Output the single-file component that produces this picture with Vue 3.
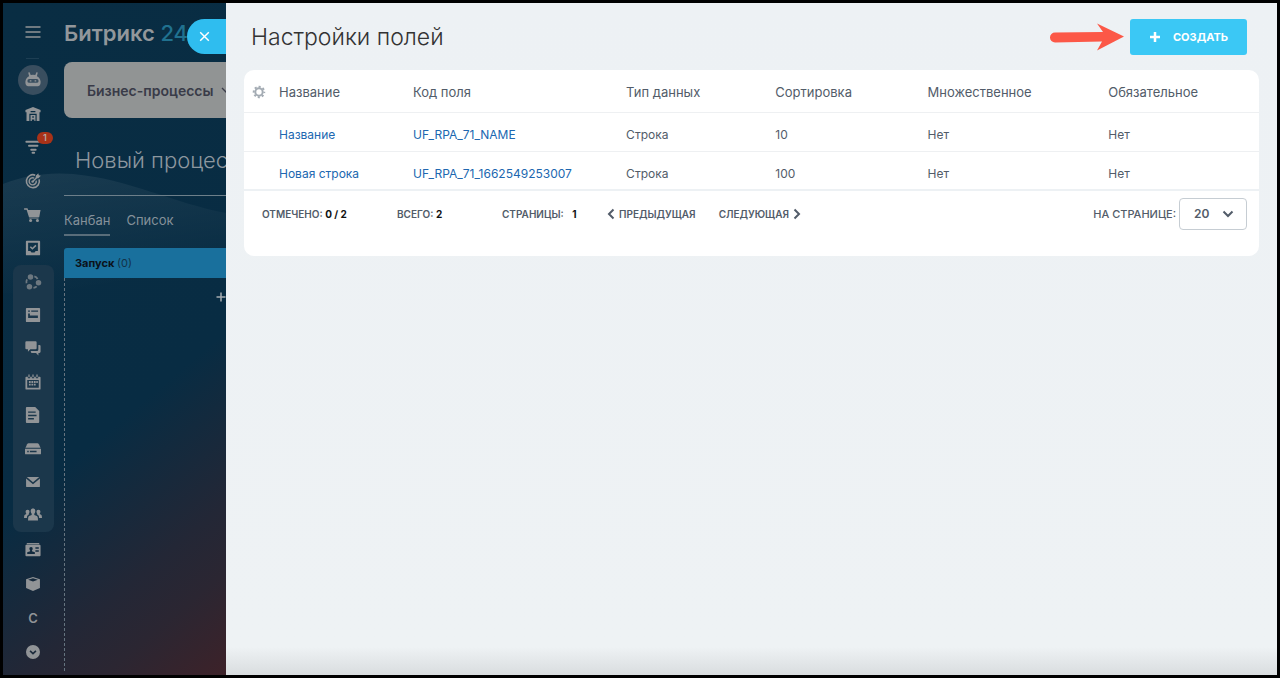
<script setup>
import { ref } from 'vue'

const columns = ['Название', 'Код поля', 'Тип данных', 'Сортировка', 'Множественное', 'Обязательное']
const rows = [
  { name: 'Название', code: 'UF_RPA_71_NAME', type: 'Строка', sort: '10', multiple: 'Нет', required: 'Нет' },
  { name: 'Новая строка', code: 'UF_RPA_71_1662549253007', type: 'Строка', sort: '100', multiple: 'Нет', required: 'Нет' },
]
const pageSize = ref('20')
</script>

<template>
  <div class="frame">
    <div class="app">
      <div class="workspace">
        <svg class="wave" viewBox="0 0 223 672" preserveAspectRatio="none" aria-hidden="true">
          <defs>
            <linearGradient id="wave-fade" x1="0" y1="0" x2="0.3" y2="1">
              <stop offset="0" stop-color="#fff" stop-opacity=".07" />
              <stop offset="1" stop-color="#fff" stop-opacity="0" />
            </linearGradient>
          </defs>
          <path d="M0 181C22 172 46 169 70 171C126 176 170 200 223 210V290H0Z" fill="url(#wave-fade)" />
        </svg>

        <nav class="sidebar" aria-label="Главное меню">
          <button class="item menu" aria-label="Меню">
            <svg viewBox="0 0 18 18"><path d="M1.500 4h15M1.500 9h15M1.500 14h15" stroke="currentColor" stroke-width="1.600" /></svg>
          </button>
          <hr class="divider">
          <div class="list head">
            <button class="item" aria-label="Роботы">
              <span class="disc">
                <svg viewBox="0 0 18 18"><path fill="currentColor" fill-rule="evenodd" d="M4.200 1.600l1.400-.4 1.100 2.900a9 9 0 0 1 4.600 0l1.100-2.900 1.400.4-.9 3.600c1.900 1 3.400 2.500 3.700 5.300.2 2.700-.6 4.700-2.600 4.700H4c-2 0-2.800-2-2.600-4.700.3-2.800 1.800-4.300 3.700-5.300zM5.300 8a1.900 1.900 0 0 0 0 3.800h7.400a1.900 1.900 0 0 0 0-3.800zM5.800 9.200h1.600v1.400H5.800zm4.800 0h1.600v1.400h-1.600z" /></svg>
              </span>
            </button>
            <button class="item" aria-label="Компания">
              <svg viewBox="0 0 18 18"><path fill="currentColor" fill-rule="evenodd" d="M9 1l8.500 3.600v2.400h-1.200V17h-3.200V8.700H4.900V17H1.700V7H.5V4.600zM6.200 10h5.600v7h-1.300v-1.800H7.700V17H6.200zm2 1.600v1.500h1.700v-1.500zM6.300 5.600v1.300h5.400V5.600z" /></svg>
            </button>
            <button class="item" aria-label="Лента">
              <svg viewBox="0 0 18 18"><g stroke="currentColor" stroke-width="2.200" stroke-linecap="round"><path d="M1.500 3h15M4.500 7.700h9.500M7 12h5" /><path d="M8.500 15.500h1.800" /></g></svg>
              <span class="badge">1</span>
            </button>
            <button class="item" aria-label="Цели">
              <svg viewBox="0 0 18 18" fill="none" stroke="currentColor"><path d="M11.500 2.400A7.300 7.300 0 1 0 15.900 7.200" stroke-width="1.800" /><path d="M10.300 5.700A4 4 0 1 0 12.600 8.500" stroke-width="1.600" /><path d="M8.800 9.600L14 4.200" stroke-width="1.600" /><path d="M12.200 5.800V3L15 .3l.5 2.300 2.300.5L15 6z" fill="currentColor" stroke="none" /><circle cx="8.600" cy="9.700" r="1.400" fill="currentColor" stroke="none" /></svg>
            </button>
            <button class="item" aria-label="Магазин">
              <svg viewBox="0 0 18 18" fill="currentColor"><path d="M-1 1.300h3.800l.7 2.200H17.500L16 11.500H4.500L1.800 3H-1zM4.800 12h10.500v1H4.800z" /><circle cx="6.300" cy="15.300" r="1.700" /><circle cx="14" cy="15.300" r="1.700" /></svg>
            </button>
            <button class="item" aria-label="Задачи">
              <svg viewBox="0 0 18 18"><path fill="currentColor" fill-rule="evenodd" d="M2 .8h14a1 1 0 0 1 1 1v14.400a1 1 0 0 1-1 1H2a1 1 0 0 1-1-1V1.800a1 1 0 0 1 1-1zm1.500 2.200v9.500H6l1.300 1.700h3.400l1.300-1.700h2.500V3z" /><path d="M6 7.600l2.300 2.200L12.300 6" fill="none" stroke="currentColor" stroke-width="1.800" /></svg>
            </button>
          </div>

          <div class="list group">
            <button class="item" aria-label="Процессы">
              <svg viewBox="0 0 18 18" class="dim"><circle cx="6.200" cy="3.300" r="3.100" fill="currentColor" /><circle cx="15.200" cy="9.800" r="3.100" fill="currentColor" /><circle cx="5" cy="14.300" r="3.100" fill="currentColor" /><path d="M10.500 2.700q2.400.7 3.700 2.900M13.200 14q-1.500 1.400-3.700 1.700M1.700 10.500q-.6-2.200.6-4.400" fill="none" stroke="currentColor" stroke-width="2" /></svg>
            </button>
            <button class="item" aria-label="Сайты">
              <svg viewBox="0 0 18 18"><path fill="currentColor" fill-rule="evenodd" d="M2 1h14a1 1 0 0 1 1 1v14a1 1 0 0 1-1 1H2a1 1 0 0 1-1-1V2a1 1 0 0 1 1-1zm1.500 2.800v1.500h2V3.800zm3.500 0v1.500h7.700V3.800zM3.500 7.300v5.200h11V7.300zM5.500 7.300h9v2.200h-9z" /></svg>
            </button>
            <button class="item" aria-label="Чат">
              <svg viewBox="0 0 18 18" fill="currentColor"><path d="M1.600 1.500h10.300a1.200 1.200 0 0 1 1.200 1.200v6.600a1.200 1.200 0 0 1-1.200 1.200H6L3.300 13.300v-2.800H1.600A1.200 1.200 0 0 1 .4 9.300V2.700a1.200 1.200 0 0 1 1.200-1.200z" /><path d="M15 5.500h1.200a1.300 1.300 0 0 1 1.300 1.300v6.500a1.300 1.300 0 0 1-1.300 1.300h-1.100v2.700l-2.700-2.700H8A1.500 1.500 0 0 1 6.500 13.200v-.7h7A1.500 1.500 0 0 0 15 11z" /></svg>
            </button>
            <button class="item" aria-label="Календарь">
              <svg viewBox="0 0 18 18" fill="currentColor"><path fill-rule="evenodd" d="M1.500 3h1.700v1.700h2.600V3h1.900v1.700h2.600V3h1.900v1.700h2.600V3h1.700a1 1 0 0 1 1 1v12.500a1 1 0 0 1-1 1h-15a1 1 0 0 1-1-1V4a1 1 0 0 1 1-1zM2.500 6.700v8.800h13V6.700z" /><path d="M3.800 .5h1.400v3.200H3.800zM8.300 .5h1.400v3.200H8.300zM12.800 .5h1.400v3.200h-1.400zM7.200 8h2v2h-2zM10 8h2v2h-2zM12.700 8h1.700v2h-1.700zM4.400 11h2v2h-2zM7.200 11h2v2h-2zM10 11h2v2h-2zM4.400 8h2v2h-2z" /></svg>
            </button>
            <button class="item" aria-label="Документы">
              <svg viewBox="0 0 18 18"><path fill="currentColor" fill-rule="evenodd" d="M2 0h9.500l4.500 4.500V17a1 1 0 0 1-1 1H2a1 1 0 0 1-1-1V1a1 1 0 0 1 1-1zm1.500 5v1.600h8.500V5zm0 3.700v1.600h9.500V8.700zm0 3.700V14H10v-1.600z" /></svg>
            </button>
            <button class="item" aria-label="Диск">
              <svg viewBox="0 0 18 18" fill="currentColor"><path d="M4 2.600h10q1 0 1.600 1L17.500 7.500H.5l1.900-3.900q.6-1 1.600-1z" /><path fill-rule="evenodd" d="M0 8.700h18V14a1 1 0 0 1-1 1H1a1 1 0 0 1-1-1zm2.500 2.300v1.700h1.700V11zm3 0v1.700H13V11z" /></svg>
            </button>
            <button class="item" aria-label="Почта">
              <svg viewBox="0 0 18 18" fill="currentColor"><path d="M2 3.500h14L9 9.300z" /><path d="M1.200 5l7.800 6.500L16.800 5v8.700a1 1 0 0 1-1 1H2.200a1 1 0 0 1-1-1z" /></svg>
            </button>
            <button class="item" aria-label="Группы">
              <svg class="wide" viewBox="0 0 18 14" fill="currentColor"><path d="M9 .5c1.700 0 2.500 1.200 2.300 2.900-.1 1-.5 1.800-1 2.300v1.200l2.600 1.200q.8.500.9 1.700l.2 2.700H4l.2-2.700q.1-1.200.9-1.700l2.600-1.200V5.700c-.5-.5-.9-1.300-1-2.300C6.500 1.700 7.300.5 9 .5z" /><path d="M3.600 1.700c1.300 0 1.900.8 1.900 2 0 1-.4 1.700-.8 2.200v.9L3.500 7.500q-.6.800-.6 2.500H0l.2-2q.1-.9.700-1.200l1.500-.9c-.4-.5-.8-1.200-.8-2.200 0-1.200.7-2 2-2zM14.400 1.700c-1.300 0-1.900.8-1.900 2 0 1 .4 1.700.8 2.200v.9l1.200.7q.6.800.6 2.500H18l-.2-2q-.1-.9-.7-1.200l-1.500-.9c.4-.5.8-1.200.8-2.200 0-1.200-.7-2-2-2z" /></svg>
            </button>
          </div>

          <div class="list tail">
            <button class="item" aria-label="CRM">
              <svg viewBox="0 0 18 18" fill="currentColor"><path d="M2 1.200h14v1.500H2z" /><path fill-rule="evenodd" d="M1.500 3.200h15a1 1 0 0 1 1 1V15a1 1 0 0 1-1 1h-15a1 1 0 0 1-1-1V4.200a1 1 0 0 1 1-1zm5.300 2.500c-1.400 0-2 .9-1.800 2.200.1.800.5 1.300.8 1.600v.8L2.500 11.600V13.500h8.600v-1.900L7.800 10.300v-.8c.3-.3.7-.8.8-1.600.2-1.300-.4-2.200-1.800-2.200zM11.700 6v1.600H15.500V6zm0 3.300v1.600h3.800V9.300z" /></svg>
            </button>
            <button class="item" aria-label="Приложения">
              <svg viewBox="0 0 18 18" fill="currentColor"><path fill-rule="evenodd" d="M9 1l7.800 2.600v10L9 17l-7.800-3.400v-10zM3.500 4.300L9 6.200l5.500-1.900L9 2.600z" /></svg>
            </button>
            <button class="item letter" aria-label="Сотрудники">С</button>
            <button class="item" aria-label="Ещё">
              <svg viewBox="0 0 18 18"><circle cx="9" cy="9" r="7.900" fill="currentColor" /><path d="M5.700 7.700L9 10.900l3.300-3.200" fill="none" stroke="#1b2a3b" stroke-width="1.800" /></svg>
            </button>
          </div>
        </nav>

        <main class="board">
          <div class="logo">Битрикс <span>24</span></div>
          <button class="tool">
            Бизнес-процессы
            <svg viewBox="0 0 10 10"><path d="M1 3l4 4 4-4" fill="none" stroke="currentColor" stroke-width="1.300" /></svg>
          </button>
          <h1 class="process">Новый процесс</h1>
          <div class="tabs">
            <a class="tab active" href="#kanban">Канбан</a>
            <a class="tab" href="#list">Список</a>
          </div>
          <section class="stage">
            <h2 class="stage-head">Запуск <span>(0)</span></h2>
            <div class="stage-body"><button class="add" aria-label="Добавить">
              <svg viewBox="0 0 10 10"><path d="M5 .5v9M.5 5h9" stroke="currentColor" stroke-width="1.500" /></svg>
            </button></div>
          </section>
        </main>

        <button class="close" aria-label="Закрыть">
          <svg viewBox="0 0 12 12"><path d="M1.300 1.300l9.400 9.400M10.700 1.300l-9.400 9.400" stroke="currentColor" stroke-width="1.600" /></svg>
        </button>
      </div>

      <section class="panel">
        <header class="panel-head">
          <h1>Настройки полей</h1>
          <svg class="arrow" viewBox="0 0 76 28" aria-hidden="true"><path d="M6 9.500L54 9L48 .5L75 13.500L48 27.500L53 18.500L6 19.500A5 5 0 0 1 6 9.500Z" fill="#fc5847" /></svg>
          <button class="create">
            <svg viewBox="0 0 12 12"><path d="M6 1v10M1 6h10" stroke="currentColor" stroke-width="2.500" /></svg>
            СОЗДАТЬ
          </button>
        </header>

        <div class="card">
          <table>
            <colgroup>
              <col class="c-gear"><col class="c-name"><col class="c-code"><col class="c-type"><col class="c-sort"><col class="c-multi"><col>
            </colgroup>
            <thead>
              <tr>
                <th>
                  <button class="gear" aria-label="Настроить список">
                    <svg viewBox="0 0 14 14"><circle cx="7" cy="7" r="3.700" fill="none" stroke="currentColor" stroke-width="2" /><circle cx="7" cy="7" r="5.300" fill="none" stroke="currentColor" stroke-width="1.900" stroke-dasharray="2.080 2.080" stroke-dashoffset="1.040" /></svg>
                  </button>
                </th>
                <th v-for="c in columns" :key="c" scope="col">{{ c }}</th>
              </tr>
            </thead>
            <tbody>
              <tr v-for="r in rows" :key="r.code">
                <td></td>
                <td><a href="#field">{{ r.name }}</a></td>
                <td><a href="#field">{{ r.code }}</a></td>
                <td>{{ r.type }}</td>
                <td>{{ r.sort }}</td>
                <td>{{ r.multiple }}</td>
                <td>{{ r.required }}</td>
              </tr>
            </tbody>
          </table>

          <footer class="pager">
            <span class="checked">ОТМЕЧЕНО: <b>0 / 2</b></span>
            <span class="total">ВСЕГО: <b>2</b></span>
            <span class="pages">СТРАНИЦЫ: <b>1</b></span>
            <button class="step prev">
              <svg viewBox="0 0 8 12"><path d="M6.500 1.500L2 6l4.500 4.500" fill="none" stroke="currentColor" stroke-width="2" /></svg>
              ПРЕДЫДУЩАЯ
            </button>
            <button class="step">
              СЛЕДУЮЩАЯ
              <svg viewBox="0 0 8 12"><path d="M1.500 1.500L6 6l-4.500 4.500" fill="none" stroke="currentColor" stroke-width="2" /></svg>
            </button>
            <label class="size-label" for="page-size">НА СТРАНИЦЕ:</label>
            <span class="size">
              <select id="page-size" v-model="pageSize">
                <option>5</option>
                <option>10</option>
                <option>20</option>
                <option>50</option>
              </select>
              <svg viewBox="0 0 12 8"><path d="M1.500 1.500L6 6l4.500-4.500" fill="none" stroke="currentColor" stroke-width="2" /></svg>
            </span>
          </footer>
        </div>
      </section>
    </div>
  </div>
</template>

<style>
body { margin: 0; background: #000; }
</style>

<style scoped>
.frame {
  box-sizing: border-box;
  min-height: 100vh;
  padding: 3px;
  display: flex;
  background: #000;
  font-family: Inter, "Open Sans", sans-serif;
}
.frame * { box-sizing: border-box; }
button { font: inherit; border: 0; padding: 0; background: none; color: inherit; cursor: pointer; }
a { text-decoration: none; }
svg { display: block; flex: none; overflow: visible; }

.app { flex: 1; display: flex; min-width: 0; }

.workspace {
  position: relative;
  flex: none;
  width: 223px;
  display: flex;
  overflow: hidden;
  background: linear-gradient(140deg, #092d43 0%, #082c43 60%, #232736 80%, #2b2632 88%, #3d2229 100%);
  color: #919497;
}
.wave { position: absolute; inset: 0; width: 100%; height: 100%; }

.sidebar { position: relative; flex: none; width: 61px; padding-left: 10px; display: flex; flex-direction: column; align-items: flex-start; }
.item { position: relative; flex: 1; width: 40px; display: flex; align-items: center; justify-content: center; }
.item svg { width: 16px; height: 16px; }
.item svg.wide { width: 18px; height: 14px; }
.item.menu { flex: none; height: 55px; padding-top: 3px; }
.item.menu svg { width: 18px; height: 18px; }
.divider { width: 13px; height: 1px; margin: 0 0 4px 13px; border: 0; background: #1d3e53; }
.list { display: flex; flex-direction: column; align-items: flex-start; width: 41px; }
.head { height: 202px; }
.group { height: 267px; border-radius: 8px; background: #1b374b; }
.tail { height: 136px; margin-top: 1px; }
.disc { display: flex; align-items: center; justify-content: center; width: 30px; height: 30px; flex: none; border-radius: 50%; background: #394e5f; }
.disc svg { width: 18px; height: 18px; }
.dim { opacity: .7; }
.letter { font-size: 13px; font-weight: 600; }
.badge {
  position: absolute; top: 2px; right: 0;
  width: 16px; height: 12px; border-radius: 6px;
  background: #a83218; color: #b5aaa6;
  font-size: 9px; line-height: 12px; font-weight: 600;
}

.board { position: relative; flex: 1; min-width: 0; display: flex; flex-direction: column; white-space: nowrap; }
.logo { height: 59px; font-size: 22px; line-height: 60px; font-weight: 600; color: #92979b; }
.logo span { color: #20718f; font-weight: 500; }
.tool {
  width: 220px; height: 56px; padding: 0 23px; border-radius: 8px;
  display: flex; align-items: center; gap: 7px;
  background: #919494; color: #393b48; font-size: 14px; font-weight: 600;
}
.tool svg { width: 10px; height: 10px; }
.process { margin: 0; height: 78px; padding: 17px 0 0 11px; font-size: 22px; line-height: 50px; font-weight: 300; color: #8d979f; border-bottom: 1px solid #6d7f8a; }
.tabs { display: flex; gap: 16px; height: 52px; padding-top: 9px; font-size: 13px; line-height: 30px; }
.tab { color: #85919a; height: 31px; }
.tab.active { border-bottom: 2px solid #596d7a; }
.stage { flex: 1; display: flex; flex-direction: column; }
.stage-head { margin: 0; height: 30px; padding-left: 11px; border-radius: 3px 0 0 0; background: #19709d; color: #0b121a; font-size: 11px; line-height: 30px; font-weight: 700; }
.stage-head span { font-weight: 400; color: #123249; }
.stage-body { flex: 1; margin-bottom: 4px; border-left: 1px dashed #65737e; }
.add { display: block; margin: 14px 0 0 151px; color: #a5acb1; }
.add svg { width: 10px; height: 10px; }

.close {
  position: absolute; top: 16px; right: 0;
  width: 39px; height: 35px; padding-left: 12px;
  border-radius: 18px 0 0 18px; background: #2fbdef; color: #fff;
}
.close svg { width: 11px; height: 11px; }

.panel { flex: 1; min-width: 0; padding: 0 18px; background: linear-gradient(#edf1f4, #eef2f4 calc(100% - 28px), #d9dddf); }
.panel-head { height: 67px; padding: 0 12px 0 7px; display: flex; align-items: center; }
h1 { margin: 0; }
.panel-head h1 { flex: 1; font-size: 23px; line-height: 30px; font-weight: 300; color: #333; }
.arrow { width: 76px; height: 28px; margin-right: 5px; }
.create {
  width: 117px; height: 36px; border-radius: 3px;
  display: flex; align-items: center; justify-content: center; gap: 12px;
  background: #3bc8f5; color: #fff; font-size: 11px; font-weight: 700;
}
.create svg { width: 12px; height: 12px; }

.card { border-radius: 10px; background: #fff; color: #525c69; overflow: hidden; }
table { width: 100%; table-layout: fixed; border-collapse: collapse; font-size: 12px; }
.c-gear { width: 35px; }
.c-name { width: 13.2%; }
.c-code { width: 21%; }
.c-type { width: 14.7%; }
.c-sort { width: 15%; }
.c-multi { width: 17.8%; }
th { height: 42px; padding: 2px 0 0; text-align: left; font-size: 13px; font-weight: 400; border-bottom: 1px solid #eef0f2; }
td { height: 39px; padding: 6px 0 0; border-bottom: 1px solid #eef0f2; }
tbody tr:last-child td { border-bottom: 2px solid #edf1f4; }
td a { color: #2067b0; }
.gear { display: block; margin-left: 8px; color: #a3abb3; }
.gear svg { width: 14px; height: 14px; }

.pager { display: flex; align-items: center; height: 65px; padding: 0 12px 20px 18px; font-size: 10px; font-weight: 600; white-space: nowrap; }
.pager b { color: #111; font-weight: 700; }
.checked { width: 135px; }
.total { width: 105px; }
.pages { width: 105px; }
.pages b { margin-left: 6px; }
.step { display: flex; align-items: center; gap: 4px; }
.step svg { width: 8px; height: 12px; }
.prev { margin-right: 23px; }
.size-label { margin-left: auto; margin-right: 3px; font-size: 11px; font-weight: 500; }
.size { position: relative; display: flex; align-items: center; }
.size select {
  appearance: none; width: 68px; height: 32px; padding: 0 14px;
  border: 1px solid #c6cdd3; border-radius: 4px; background: #fff; color: #525c69;
  font-family: inherit; font-size: 12px; font-weight: 600;
}
.size svg { position: absolute; right: 13px; width: 12px; height: 8px; pointer-events: none; }
</style>
